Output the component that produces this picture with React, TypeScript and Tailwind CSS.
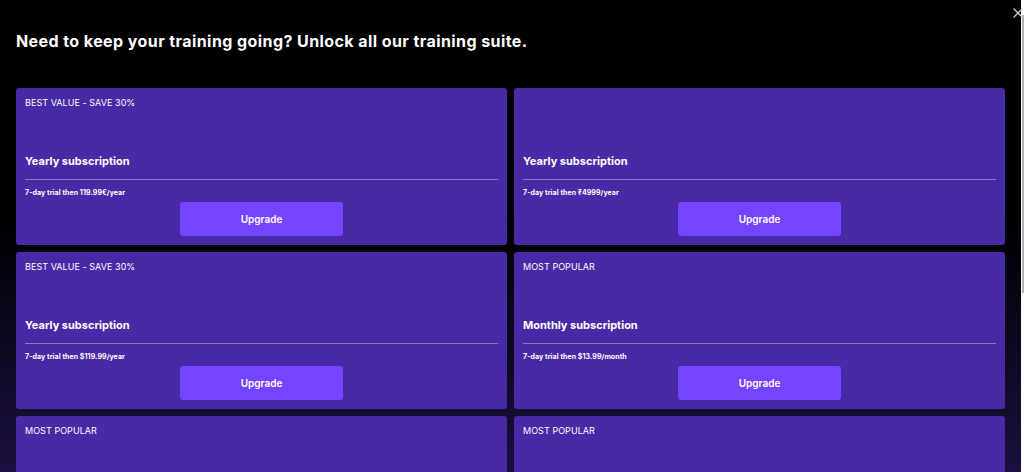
import { X } from "lucide-react";

const plans = [
  { badge: "BEST VALUE - SAVE 30%", name: "Yearly subscription", price: "7-day trial then 119.99€/year" },
  { badge: "", name: "Yearly subscription", price: "7-day trial then ₹4999/year" },
  { badge: "BEST VALUE - SAVE 30%", name: "Yearly subscription", price: "7-day trial then $119.99/year" },
  { badge: "MOST POPULAR", name: "Monthly subscription", price: "7-day trial then $13.99/month" },
  { badge: "MOST POPULAR" },
  { badge: "MOST POPULAR" },
];

function PlanCard({ badge, name, price }: { badge: string; name?: string; price?: string }) {
  return (
    <div className="flex h-[157px] flex-col rounded-[3px] bg-[#4829a6] px-[9px] pt-[9px] text-white">
      <div className="h-[11px] text-[9px] leading-[11px] tracking-[0.05px]">{badge}</div>
      {name && (
        <>
          <div className="mt-[45px] text-[11px] leading-[16px] font-bold">{name}</div>
          <div className="mt-[10px] h-px bg-[#8d78c8]" />
          <div className="mt-[8px] text-[7px] leading-[10px] font-bold tracking-[0.07px]">{price}</div>
          <button className="mx-auto mt-[4px] flex h-[34px] w-[163px] items-center justify-center rounded-[3px] bg-[#7444ff] pt-px text-[10px] font-semibold text-white">
            Upgrade
          </button>
        </>
      )}
    </div>
  );
}

export default function App() {
  return (
    <div className="relative flex h-[472px] w-[1024px] overflow-hidden bg-white font-['Inter',sans-serif]">
      <div className="h-full w-[1021px] overflow-hidden bg-[linear-gradient(to_bottom,#000000_45%,#1a0f3e_100%)] pt-[30px]">
        <h1 className="pl-[16px] text-[16px] leading-[22px] font-bold tracking-[0.42px] text-white">
          Need to keep your training going? Unlock all our training suite.
        </h1>
        <div className="mt-[36px] grid w-[1005px] grid-cols-2 gap-x-[7px] gap-y-[7px] pl-[16px]">
          {plans.map((plan, i) => (
            <PlanCard key={i} {...plan} />
          ))}
        </div>
      </div>
      {/* scrollbar thumb */}
      <div className="absolute top-[15px] right-0 h-[278px] w-[2px] bg-[#b4b4b4]" />
      <X className="absolute top-[5px] left-[1010px] text-[#c8c8d0]" size={16} strokeWidth={2} />
    </div>
  );
}
